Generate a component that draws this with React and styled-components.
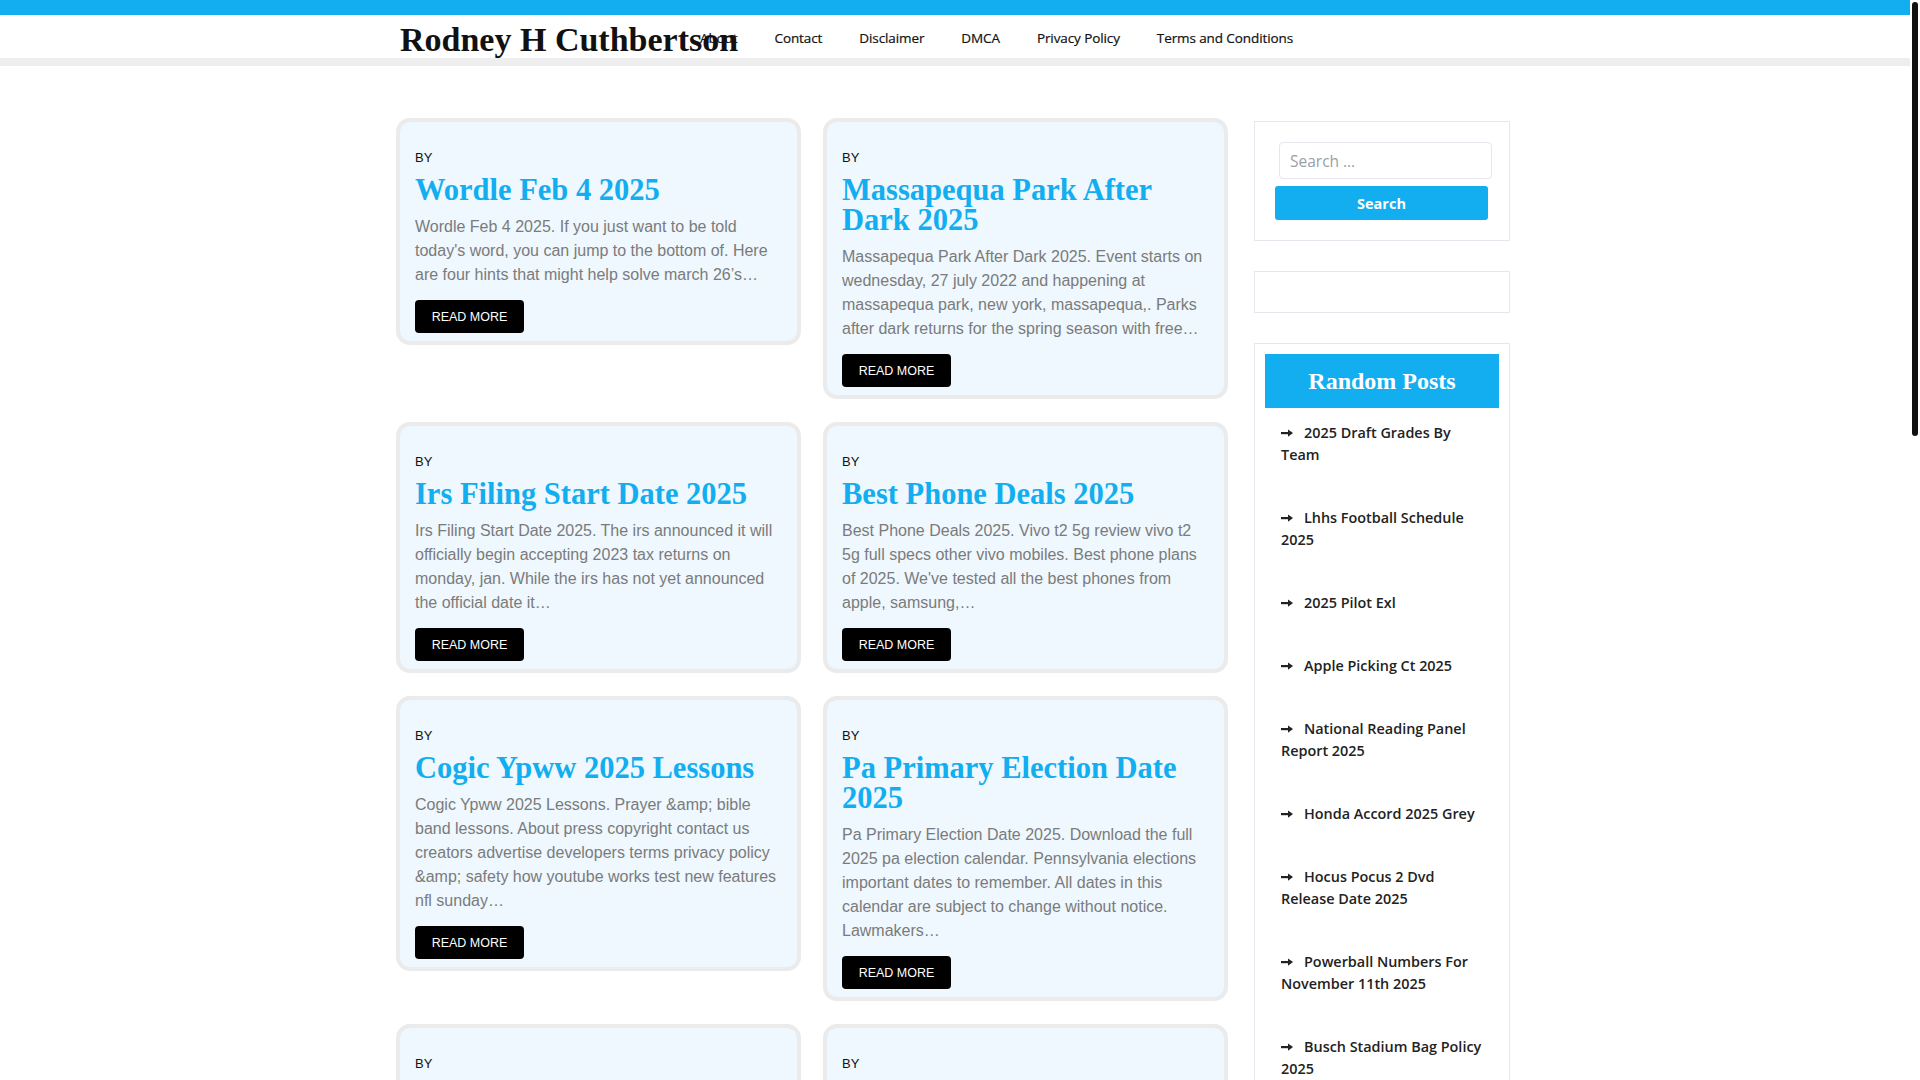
import React from 'react';
import styled, { createGlobalStyle } from 'styled-components';

const BLUE = '#12aef0';

const GlobalStyle = createGlobalStyle`
  html, body { margin: 0; padding: 0; background: #fff; }
  body { font-family: "Liberation Sans", Arial, sans-serif; color: #222; }
  * { box-sizing: border-box; }
`;

const Page = styled.div`
  margin-right: 10px;
`;

const ScrollRail = styled.div`
  position: fixed;
  top: 0;
  right: 0;
  width: 10px;
  height: 100vh;
  background: #fff;
  padding: 2px;
  z-index: 10;
`;

const ScrollThumb = styled.div`
  width: 6px;
  height: 434px;
  border-radius: 3px;
  background: #111;
`;

const TopBar = styled.div`
  height: 15px;
  background: ${BLUE};
`;

const Header = styled.header`
  background: #fff;
  border-bottom: 8px solid #eeeeee;
`;

const Container = styled.div`
  width: 1118px;
  padding-right: 4px;
  margin: 0 auto;
`;

const HeaderInner = styled(Container)`
  display: flex;
  align-items: center;
  height: 43px;
`;

const Brand = styled.a`
  flex: 0 0 304px;
  min-width: 0;
  padding: 6px 0 0 4px;
  font-family: "Liberation Serif", "Times New Roman", serif;
  font-weight: 700;
  font-size: 34px;
  line-height: 40px;
  white-space: nowrap;
  color: #111;
  text-decoration: none;
`;

const Nav = styled.nav`
  display: flex;
  align-items: center;
  gap: 37px;
  position: relative;
  padding-top: 2px;
`;

const NavLink = styled.a`
  font-family: "Open Sans", "Noto Sans", sans-serif;
  font-weight: 500;
  font-size: 13.5px;
  color: #111;
  text-decoration: none;
  letter-spacing: -0.1px;
  -webkit-text-stroke: 0.2px #111;
`;

const Main = styled(Container)`
  display: grid;
  grid-template-columns: 832px 256px;
  gap: 26px;
  align-items: start;
  padding-top: 52px;
`;

const Posts = styled.div`
  display: grid;
  grid-template-columns: repeat(2, minmax(0, 1fr));
  column-gap: 22px;
  row-gap: 23px;
  align-items: start;
`;

const Card = styled.article`
  background: #eef8fe;
  border: 4px solid #ebebeb;
  border-radius: 14px;
  padding: 26px 12px 8px 15px;
`;

const By = styled.div`
  font-size: 13px;
  line-height: 20px;
  color: #111;
  text-transform: uppercase;
`;

const PostTitle = styled.h2`
  margin: 7px 0 0;
  max-width: 360px;
  font-family: "Liberation Serif", "Times New Roman", serif;
  font-weight: 700;
  font-size: 30.5px;
  line-height: 30px;
  color: ${BLUE};
`;

const Excerpt = styled.p`
  margin: 10px 0 0;
  font-size: 16px;
  line-height: 24px;
  color: #7b7b7b;
`;

const ExcerptLine = styled.span`
  display: block;
  white-space: nowrap;
`;

const ReadMore = styled.a`
  display: flex;
  align-items: center;
  justify-content: center;
  margin-top: 13px;
  width: 109px;
  height: 33px;
  background: #000;
  border-radius: 4px;
  color: #fff;
  font-size: 12.5px;
  text-transform: uppercase;
  text-decoration: none;
`;

const Sidebar = styled.aside`
  display: flex;
  flex-direction: column;
  gap: 30px;
  margin-top: 3px;
`;

const Widget = styled.section`
  border: 1px solid #e6e6ee;
  min-height: ${(p) => p.$minH || 0}px;
`;

const SearchForm = styled.form`
  padding: 20px 0 20px 20px;
  display: flex;
  flex-direction: column;
  gap: 7px;
`;

const SearchInput = styled.input`
  margin-left: 4px;
  width: 213px;
  height: 37px;
  border: 1px solid #e6e6ee;
  border-radius: 4px;
  padding: 0 10px;
  font-family: "Open Sans", "Noto Sans", sans-serif;
  font-size: 15.5px;
  color: #333;
  outline: none;
  &::placeholder { color: #9aa0a6; }
`;

const SearchButton = styled.button`
  width: 213px;
  height: 34px;
  border: none;
  border-radius: 3px;
  background: ${BLUE};
  color: #fff;
  font-family: "Open Sans", "Noto Sans", sans-serif;
  font-weight: 700;
  font-size: 14.5px;
  cursor: pointer;
`;

const RandomBox = styled(Widget)`
  padding: 10px;
`;

const WidgetTitle = styled.h3`
  margin: 0;
  height: 54px;
  display: flex;
  align-items: center;
  justify-content: center;
  background: ${BLUE};
  color: #fff;
  font-family: "Liberation Serif", "Times New Roman", serif;
  font-weight: 700;
  font-size: 24px;
`;

const List = styled.ul`
  list-style: none;
  margin: 0;
  padding: 0;
`;

const Item = styled.li`
  padding: 14px 15px 27px 16px;
  font-family: "Open Sans", "Noto Sans", sans-serif;
  font-weight: 600;
  font-size: 14.4px;
  line-height: 22px;
  color: #222;
`;

const Arrow = styled.svg`
  display: inline-block;
  width: 12px;
  height: 8px;
  margin-right: 11px;
  vertical-align: 1px;
`;

const Footer = styled.footer`
  margin-top: 60px;
  border-top: 8px solid #eeeeee;
  background: #fff;
  height: 120px;
  display: flex;
  align-items: center;
  justify-content: center;
  font-size: 14px;
  color: #555;
`;

const ArrowIcon = () => (
  <Arrow viewBox="0 0 12 8" aria-hidden="true">
    <rect x="0" y="3" width="8" height="2.2" fill="#222" />
    <polygon points="7,0.4 12,4.1 7,7.8" fill="#222" />
  </Arrow>
);

const posts = [
  {
    title: 'Wordle Feb 4 2025',
    lines: [
      'Wordle Feb 4 2025. If you just want to be told',
      "today's word, you can jump to the bottom of. Here",
      'are four hints that might help solve march 26’s…',
    ],
  },
  {
    title: 'Massapequa Park After Dark 2025',
    lines: [
      'Massapequa Park After Dark 2025. Event starts on',
      'wednesday, 27 july 2022 and happening at',
      'massapequa park, new york, massapequa,. Parks',
      'after dark returns for the spring season with free…',
    ],
  },
  {
    title: 'Irs Filing Start Date 2025',
    lines: [
      'Irs Filing Start Date 2025. The irs announced it will',
      'officially begin accepting 2023 tax returns on',
      'monday, jan. While the irs has not yet announced',
      'the official date it…',
    ],
  },
  {
    title: 'Best Phone Deals 2025',
    lines: [
      'Best Phone Deals 2025. Vivo t2 5g review vivo t2',
      '5g full specs other vivo mobiles. Best phone plans',
      "of 2025. We've tested all the best phones from",
      'apple, samsung,…',
    ],
  },
  {
    title: 'Cogic Ypww 2025 Lessons',
    lines: [
      'Cogic Ypww 2025 Lessons. Prayer &amp; bible',
      'band lessons. About press copyright contact us',
      'creators advertise developers terms privacy policy',
      '&amp; safety how youtube works test new features',
      'nfl sunday…',
    ],
  },
  {
    title: 'Pa Primary Election Date 2025',
    lines: [
      'Pa Primary Election Date 2025. Download the full',
      '2025 pa election calendar. Pennsylvania elections',
      'important dates to remember. All dates in this',
      'calendar are subject to change without notice.',
      'Lawmakers…',
    ],
  },
  {
    title: 'Nfl Draft Order 2025',
    lines: [
      'Nfl Draft Order 2025. The full order for every',
      'round of the upcoming draft, updated after every',
      'game of the season. See where your team will pick…',
    ],
  },
  {
    title: 'Easter Sunday 2025 Date',
    lines: [
      'Easter Sunday 2025 Date. Easter falls on a',
      'different date each year, based on the first full',
      'moon after the spring equinox. Here is when it…',
    ],
  },
  {
    title: 'Spring Break 2025 Dates',
    lines: [
      'Spring Break 2025 Dates. Find out when schools',
      'and colleges across the country will take their',
      'spring break this year, with a full list by state…',
    ],
  },
  {
    title: 'Tax Brackets 2025 Married',
    lines: [
      'Tax Brackets 2025 Married. The irs has released',
      'the new federal income tax brackets and standard',
      'deduction amounts for married couples filing…',
    ],
  },
];

const randomPosts = [
  '2025 Draft Grades By Team',
  'Lhhs Football Schedule 2025',
  '2025 Pilot Exl',
  'Apple Picking Ct 2025',
  'National Reading Panel Report 2025',
  'Honda Accord 2025 Grey',
  'Hocus Pocus 2 Dvd Release Date 2025',
  'Powerball Numbers For November 11th 2025',
  'Busch Stadium Bag Policy 2025',
  'Memorial Day Sale 2025',
  'Chevy Silverado 2025 Price',
];

const navItems = ['About', 'Contact', 'Disclaimer', 'DMCA', 'Privacy Policy', 'Terms and Conditions'];

export default function App() {
  return (
    <Page>
      <GlobalStyle />
      <ScrollRail aria-hidden="true">
        <ScrollThumb />
      </ScrollRail>
      <TopBar />
      <Header>
        <HeaderInner>
          <Brand href="#">Rodney H Cuthbertson</Brand>
          <Nav>
            {navItems.map((n) => (
              <NavLink key={n} href="#">
                {n}
              </NavLink>
            ))}
          </Nav>
        </HeaderInner>
      </Header>
      <Main>
        <Posts>
          {posts.map((p) => (
            <Card key={p.title}>
              <By>By</By>
              <PostTitle>{p.title}</PostTitle>
              <Excerpt>
                {p.lines.map((l) => (
                  <ExcerptLine key={l}>{l}</ExcerptLine>
                ))}
              </Excerpt>
              <ReadMore href="#">Read More</ReadMore>
            </Card>
          ))}
        </Posts>
        <Sidebar>
          <Widget>
            <SearchForm onSubmit={(e) => e.preventDefault()}>
              <SearchInput type="search" placeholder="Search …" />
              <SearchButton type="submit">Search</SearchButton>
            </SearchForm>
          </Widget>
          <Widget $minH={42} />
          <RandomBox>
            <WidgetTitle>Random Posts</WidgetTitle>
            <List>
              {randomPosts.map((r) => (
                <Item key={r}>
                  <ArrowIcon />
                  {r}
                </Item>
              ))}
            </List>
          </RandomBox>
        </Sidebar>
      </Main>
      <Footer>Copyright © 2025 Rodney H Cuthbertson</Footer>
    </Page>
  );
}
